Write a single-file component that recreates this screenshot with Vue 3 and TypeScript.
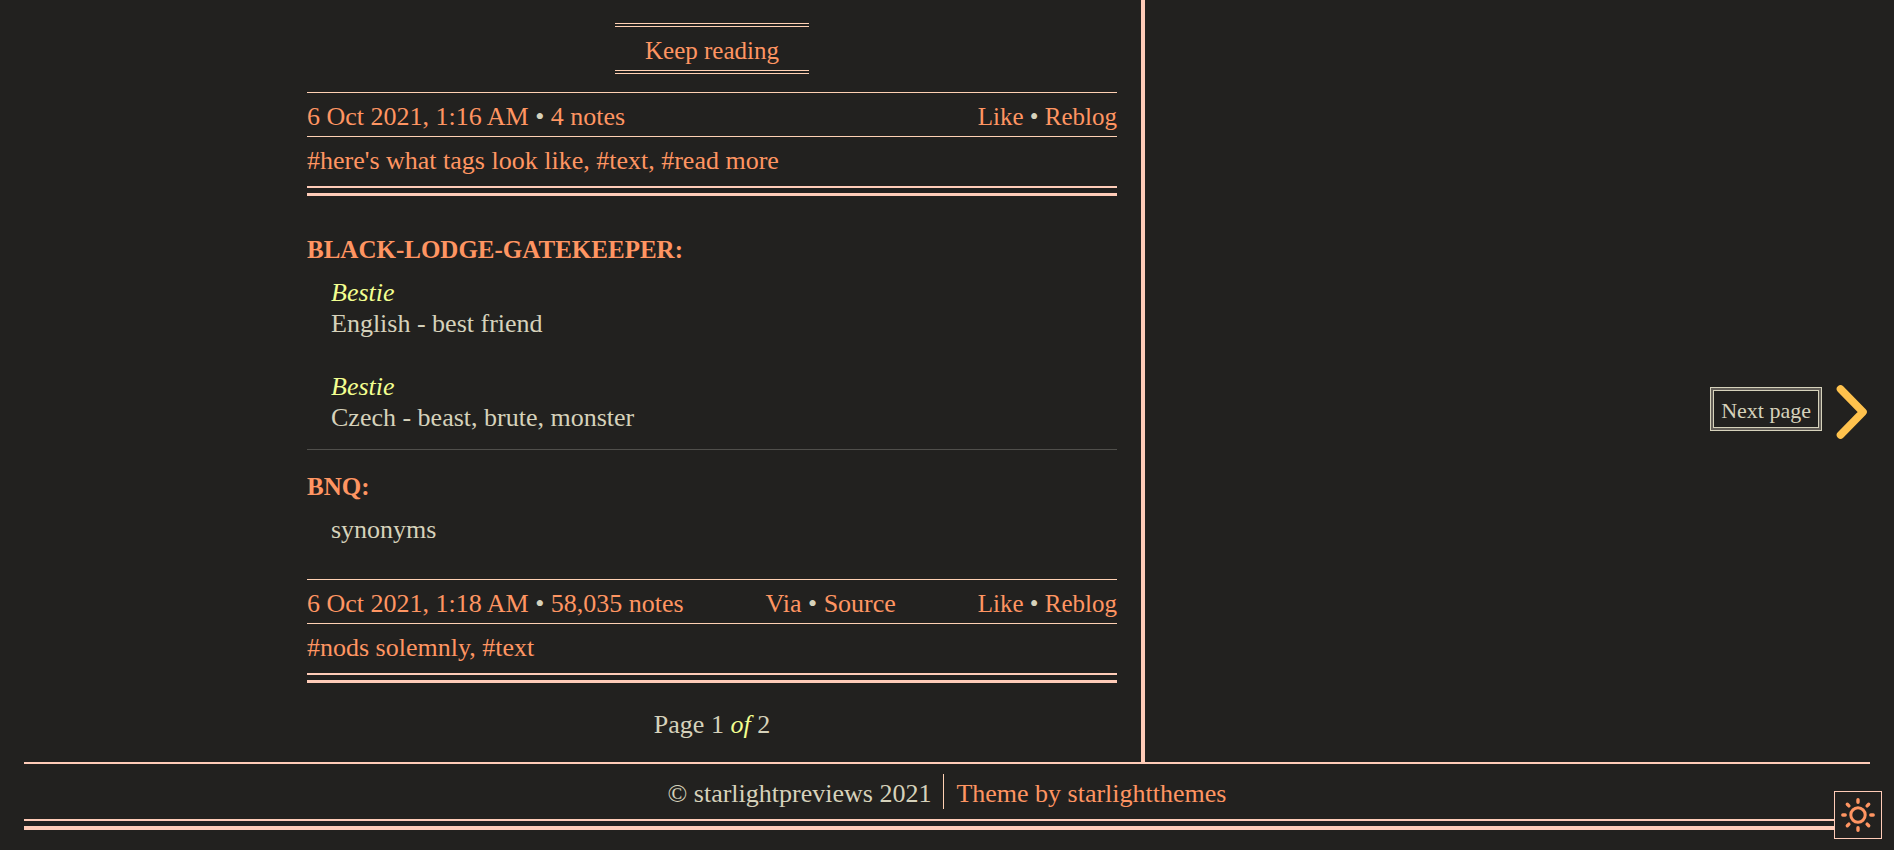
<script setup lang="ts">
interface Link {
  label: string
}
interface Meta {
  date: string
  notes: string
  origin: Link[]
  tags: string[]
}

const actions: Link[] = [{ label: 'Like' }, { label: 'Reblog' }]

const first: Meta = {
  date: '6 Oct 2021, 1:16 AM',
  notes: '4 notes',
  origin: [],
  tags: ["#here's what tags look like", '#text', '#read more'],
}
const second: Meta = {
  date: '6 Oct 2021, 1:18 AM',
  notes: '58,035 notes',
  origin: [{ label: 'Via' }, { label: 'Source' }],
  tags: ['#nods solemnly', '#text'],
}
const posts: Meta[] = [first, second]
</script>

<template>
  <div class="page">
    <div class="columns">
      <main class="feed">
        <article v-for="(post, index) in posts" :key="post.date" class="post">
          <a v-if="index === 0" href="#" class="keep">Keep reading</a>
          <div v-else class="thread">
            <section class="reply">
              <h2><a href="#">BLACK-LODGE-GATEKEEPER:</a></h2>
              <blockquote>
                <p><em>Bestie</em><br />English - best friend</p>
                <p><em>Bestie</em><br />Czech - beast, brute, monster</p>
              </blockquote>
            </section>
            <section class="reply">
              <h2><a href="#">BNQ:</a></h2>
              <blockquote><p>synonyms</p></blockquote>
            </section>
          </div>
          <div class="meta">
            <div><a href="#">{{ post.date }}</a> • <a href="#">{{ post.notes }}</a></div>
            <div v-if="post.origin.length">
              <template v-for="(link, i) in post.origin" :key="link.label"><template v-if="i"> • </template><a href="#">{{ link.label }}</a></template>
            </div>
            <div class="actions">
              <template v-for="(link, i) in actions" :key="link.label"><template v-if="i"> • </template><a href="#">{{ link.label }}</a></template>
            </div>
          </div>
          <div class="tags">
            <template v-for="(tag, i) in post.tags" :key="tag"><a href="#">{{ tag }}{{ i < post.tags.length - 1 ? ',' : '' }}</a>{{ ' ' }}</template>
          </div>
          <div class="rule"></div>
        </article>
        <p class="count">Page 1 <em>of</em> 2</p>
      </main>
    </div>

    <footer class="footer">
      <div class="credits">
        <span class="copyright">© starlightpreviews 2021</span>
        <a href="#" class="theme">Theme by starlightthemes</a>
      </div>
      <div class="rule heavy"></div>
    </footer>

    <a href="#" class="next">
      <span class="tip">Next page</span>
      <svg width="32" height="56" viewBox="0 0 32 56" aria-hidden="true">
        <path d="M4.5 5 L27 28 L4.5 51" fill="none" stroke="#ffc24d" stroke-width="7.6" stroke-linecap="round" stroke-linejoin="round" />
      </svg>
    </a>

    <button type="button" class="mode" aria-label="Toggle light mode">
      <svg width="36" height="36" viewBox="0 0 36 36" fill="none" stroke="#ff9562" stroke-width="3.4" stroke-linecap="round" aria-hidden="true">
        <circle cx="18" cy="18" r="7.2" stroke-width="3" />
        <path d="M18 2.8V5.2M18 30.8V33.2M2.8 18H5.2M30.8 18H33.2M7.3 7.3L8.9 8.9M27.1 27.1L28.7 28.7M7.3 28.7L8.9 27.1M27.1 8.9L28.7 7.3" />
      </svg>
    </button>
  </div>
</template>

<style>
body {
  margin: 0;
  background: #22211f;
}
</style>

<style scoped>
.page {
  box-sizing: border-box;
  min-height: 100vh;
  padding: 0 24px 20px;
  display: flex;
  flex-direction: column;
  background: #22211f;
  color: #d6d2bb;
  font: 26px/30px "Liberation Serif", "Times New Roman", serif;
}
a {
  color: #ff9562;
  text-decoration: none;
}
em {
  color: #f2ff90;
}
p,
h2,
blockquote {
  margin: 0;
}
.columns {
  flex: 1;
  display: grid;
  grid-template-columns: 283fr 838fr 725fr;
}
.feed {
  grid-column: 2;
  padding: 23px 24px 22px 0;
  border-right: 4px solid #ffccb8;
}
.keep {
  display: block;
  width: fit-content;
  margin: 0 auto 18px;
  padding: 9px 30px 4px;
  border: solid #ffd1b3;
  border-style: double none;
  border-width: 4px 0;
  font-size: 25px;
}
.thread {
  padding: 39px 0 34px;
}
.reply + .reply {
  margin-top: 16px;
  padding-top: 22px;
  border-top: 1px solid #504f4b;
}
h2 {
  font-size: 25px;
  line-height: 30px;
  font-weight: bold;
}
blockquote {
  padding: 12px 0 0 24px;
  line-height: 31px;
}
blockquote p + p {
  margin-top: 32px;
}
.meta {
  display: flex;
  justify-content: space-between;
  padding: 9px 0 4px;
  border: solid #ffd1b3;
  border-width: 1px 0;
}
.actions {
  font-size: 25px;
}
.tags {
  padding: 9px 0 10px;
}
.rule {
  height: 5px;
  border: solid #ffccb8;
  border-width: 2px 0 3px;
}
.rule.heavy {
  border-bottom-width: 4px;
}
.count {
  margin-top: 27px;
  text-align: center;
}
.footer {
  border-top: 2px solid #ffccb8;
}
.credits {
  display: flex;
  justify-content: center;
  padding: 10px 0;
}
.credits > * {
  padding: 5px 12px 0;
}
.theme {
  border-left: 1px solid #ffd1b3;
}
.next {
  position: fixed;
  right: 26px;
  top: 384px;
  display: flex;
  align-items: center;
  gap: 14px;
}
.tip {
  box-sizing: border-box;
  height: 44px;
  padding: 5px 7px 0;
  margin-bottom: 6px;
  border: 4px double #d6d2bb;
  background: #635e57;
  color: #d6d2bb;
  font-size: 22px;
  box-shadow: inset 0 0 0 60px #22211f;
}
.mode {
  position: fixed;
  right: 12px;
  bottom: 11px;
  box-sizing: border-box;
  width: 48px;
  height: 48px;
  padding: 0;
  display: grid;
  place-items: center;
  border: 1px solid #ffccb8;
  background: #22211f;
  cursor: pointer;
}
</style>
